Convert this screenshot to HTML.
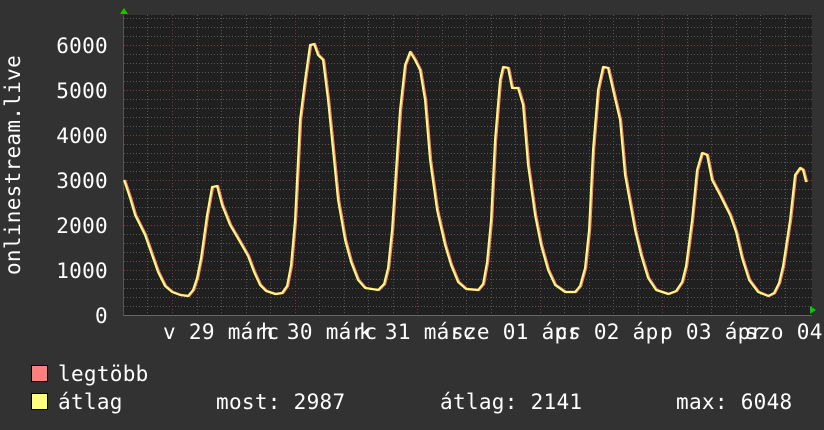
<!DOCTYPE html>
<html><head><meta charset="utf-8"><style>
html,body{margin:0;padding:0;background:#323232;width:824px;height:430px;overflow:hidden}
svg{display:block}
text{font-family:"DejaVu Sans Mono","Liberation Mono",monospace;font-size:21px;fill:#fff;letter-spacing:0.3px}
</style></head><body>
<svg width="824" height="430" viewBox="0 0 824 430" xmlns="http://www.w3.org/2000/svg">
<rect x="0" y="0" width="824" height="430" fill="#323232"/>
<rect x="124" y="15" width="688" height="300" fill="#202020"/>
<g stroke="#555" stroke-width="1" stroke-dasharray="1,2" fill="none">
<path d="M124 306.5H812M124 297.5H812M124 288.5H812M124 279.5H812M124 261.5H812M124 252.5H812M124 243.5H812M124 234.5H812M124 216.5H812M124 207.5H812M124 198.5H812M124 189.5H812M124 171.5H812M124 162.5H812M124 153.5H812M124 144.5H812M124 126.5H812M124 117.5H812M124 108.5H812M124 99.5H812M124 81.5H812M124 72.5H812M124 63.5H812M124 54.5H812M124 36.5H812M124 27.5H812M124 18.5H812"/>
<path d="M147.5 15V315M197.5 15V315M221.5 15V315M246.5 15V315M270.5 15V315M319.5 15V315M344.5 15V315M368.5 15V315M393.5 15V315M442.5 15V315M466.5 15V315M491.5 15V315M515.5 15V315M564.5 15V315M589.5 15V315M613.5 15V315M638.5 15V315M687.5 15V315M711.5 15V315M736.5 15V315M760.5 15V315M785.5 15V315"/>
</g>
<g stroke="#7a3a3a" stroke-width="1" stroke-dasharray="1,2" fill="none">
<path d="M124 270.5H812M124 225.5H812M124 180.5H812M124 135.5H812M124 90.5H812M124 45.5H812"/>
<path d="M172.5 15V315M295.5 15V315M417.5 15V315M540.5 15V315M662.5 15V315"/>
</g>
<path d="M124 315.5H812" stroke="#666" stroke-width="1"/>
<path d="M123.5 15V316" stroke="#555" stroke-width="1"/>
<polygon points="120,14 128,14 124,8" fill="#00cc00"/>
<polygon points="810,306 810,314 816,310" fill="#00cc00"/>
<g fill="none" stroke-linejoin="round">
<polyline stroke="#ff7f7f" stroke-width="2.4" transform="translate(1,0)" points="124,180 130,198 135,215 145,235 152,255 158,272 165,286 172,292 180,295 188,296 193,290 197,278 201,258 207,215 212,187 217,186 222,205 230,225 240,242 248,256 254,272 260,285 266,291 275,294 282,293 287,286 291,265 295,220 300,120 305,80 310,45 314,44 318,55 323,60 328,100 333,150 338,200 345,240 351,262 358,280 365,288 378,290 384,284 388,268 392,230 396,170 400,110 405,65 410,52 415,60 420,70 425,100 430,160 437,210 445,245 451,265 458,282 466,289 478,290 483,284 487,262 491,220 495,140 500,80 503,67 508,68 512,88 518,88 523,105 528,165 535,215 541,245 548,270 555,285 565,292 575,292 580,286 585,268 589,230 593,150 598,90 603,67 608,68 613,90 620,120 625,175 635,230 641,255 648,278 656,290 668,294 676,291 682,282 686,266 692,220 697,170 702,153 707,155 712,180 720,195 730,215 736,232 742,258 749,280 758,292 768,296 774,293 779,283 783,266 790,220 795,175 800,168 803,170 806,182"/>
<polyline stroke="#ffff7f" stroke-width="2" points="124,180 130,198 135,215 145,235 152,255 158,272 165,286 172,292 180,295 188,296 193,290 197,278 201,258 207,215 212,187 217,186 222,205 230,225 240,242 248,256 254,272 260,285 266,291 275,294 282,293 287,286 291,265 295,220 300,120 305,80 310,45 314,44 318,55 323,60 328,100 333,150 338,200 345,240 351,262 358,280 365,288 378,290 384,284 388,268 392,230 396,170 400,110 405,65 410,52 415,60 420,70 425,100 430,160 437,210 445,245 451,265 458,282 466,289 478,290 483,284 487,262 491,220 495,140 500,80 503,67 508,68 512,88 518,88 523,105 528,165 535,215 541,245 548,270 555,285 565,292 575,292 580,286 585,268 589,230 593,150 598,90 603,67 608,68 613,90 620,120 625,175 635,230 641,255 648,278 656,290 668,294 676,291 682,282 686,266 692,220 697,170 702,153 707,155 712,180 720,195 730,215 736,232 742,258 749,280 758,292 768,296 774,293 779,283 783,266 790,220 795,175 800,168 803,170 806,182"/>
</g>
<g text-anchor="end">
<text x="108" y="53">6000</text>
<text x="108" y="98">5000</text>
<text x="108" y="143">4000</text>
<text x="108" y="188">3000</text>
<text x="108" y="233">2000</text>
<text x="108" y="278">1000</text>
<text x="108" y="323">0</text>
</g>
<text transform="translate(20,165) rotate(-90)" text-anchor="middle">onlinestream.live</text>
<text x="163" y="339" xml:space="preserve">v 29 márc</text>
<text x="261" y="339" xml:space="preserve">h 30 márc</text>
<text x="359" y="339" xml:space="preserve">k 31 márc</text>
<text x="451" y="339" xml:space="preserve">sze 01 ápr</text>
<text x="555" y="339" xml:space="preserve">cs 02 ápr</text>
<text x="660" y="339" xml:space="preserve">p 03 ápr</text>
<text x="745" y="339" xml:space="preserve">szo 04 ápr</text>
<rect x="31.5" y="365.5" width="16" height="16" fill="#ff7f7f" stroke="#000"/>
<rect x="31.5" y="393.5" width="16" height="16" fill="#ffff7f" stroke="#000"/>
<text x="58" y="381">legtöbb</text>
<text x="58" y="409">átlag</text>
<text x="216" y="409">most: 2987</text>
<text x="440" y="409">átlag: 2141</text>
<text x="676" y="409">max: 6048</text>
</svg>
</body></html>
